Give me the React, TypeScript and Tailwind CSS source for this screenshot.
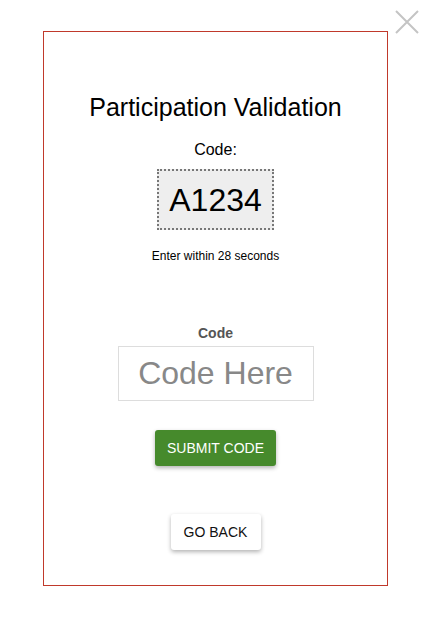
import React, { useState } from 'react';

const App: React.FC = () => {
  const [code, setCode] = useState('');

  return (
    <div className="relative w-[431px] h-[620px] bg-white" style={{ fontFamily: '"Liberation Sans", Arial, sans-serif' }}>
      {/* Close button */}
      <button type="button" aria-label="Close" className="absolute left-[393px] top-[8px] w-[28px] h-[28px]">
        <svg width="28" height="28" viewBox="0 0 28 28">
          <path d="M3 3 L25 25 M25 3 L3 25" stroke="#c4c4c4" strokeWidth="2" fill="none" />
        </svg>
      </button>

      <div className="pt-[31px] pl-[43px]">
        <div className="w-[345px] h-[555px] border border-[#c0392b] flex flex-col items-center">
          <h1 className="mt-[60px] text-[25px] leading-[30px] text-black">Participation Validation</h1>
          <div className="mt-[18px] text-[16px] leading-[20px] text-black">Code:</div>
          <div className="mt-[9px] w-[117px] h-[61px] border-2 border-dotted border-[#777] bg-[#eeeeee] flex items-center justify-center text-[32px] text-black">
            A1234
          </div>
          <div className="mt-[19px] text-[12px] leading-[15px] text-black">Enter within 28 seconds</div>

          <label htmlFor="code" className="mt-[61px] text-[14px] leading-[16px] font-bold text-[#555]">Code</label>
          <input
            id="code"
            value={code}
            onChange={e => setCode(e.target.value)}
            placeholder="Code Here"
            className="mt-[5px] w-[196px] h-[55px] border border-[#dddddd] text-center text-[32px] text-black placeholder-[#888] outline-none"
          />

          <button
            type="button"
            className="mt-[29px] w-[121px] h-[36px] rounded-[3px] bg-[#468a2c] text-white text-[14px] uppercase shadow-[0_2px_4px_rgba(0,0,0,0.3)]"
          >
            Submit Code
          </button>

          <button
            type="button"
            className="mt-[48px] w-[90px] h-[36px] rounded-[3px] bg-white text-[#111] text-[14px] uppercase shadow-[0_2px_4px_rgba(0,0,0,0.3)]"
          >
            Go Back
          </button>
        </div>
      </div>
    </div>
  );
};

export default App;
